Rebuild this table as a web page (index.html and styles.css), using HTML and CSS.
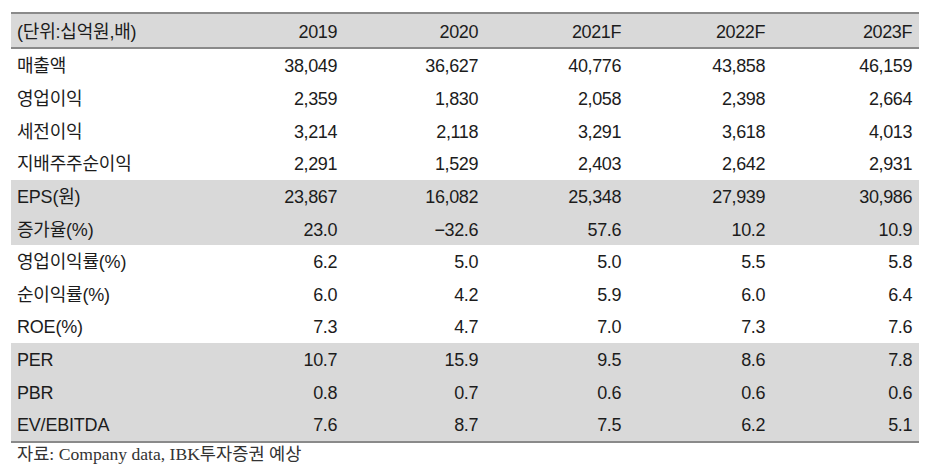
FILE: index.html
```html
<!DOCTYPE html>
<html lang="ko">
<head>
<meta charset="utf-8">
<link rel="stylesheet" href="styles.css">
</head>
<body>
<div class="wrap">
  <div class="table">
    <div class="row head"><div class="lab">(단위:십억원,배)</div><div>2019</div><div>2020</div><div>2021F</div><div>2022F</div><div>2023F</div></div>
    <div class="row"><div class="lab">매출액</div><div>38,049</div><div>36,627</div><div>40,776</div><div>43,858</div><div>46,159</div></div>
    <div class="row"><div class="lab">영업이익</div><div>2,359</div><div>1,830</div><div>2,058</div><div>2,398</div><div>2,664</div></div>
    <div class="row"><div class="lab">세전이익</div><div>3,214</div><div>2,118</div><div>3,291</div><div>3,618</div><div>4,013</div></div>
    <div class="row"><div class="lab">지배주주순이익</div><div>2,291</div><div>1,529</div><div>2,403</div><div>2,642</div><div>2,931</div></div>
    <div class="row band"><div class="lab">EPS(원)</div><div>23,867</div><div>16,082</div><div>25,348</div><div>27,939</div><div>30,986</div></div>
    <div class="row band"><div class="lab">증가율(%)</div><div>23.0</div><div>−32.6</div><div>57.6</div><div>10.2</div><div>10.9</div></div>
    <div class="row"><div class="lab">영업이익률(%)</div><div>6.2</div><div>5.0</div><div>5.0</div><div>5.5</div><div>5.8</div></div>
    <div class="row"><div class="lab">순이익률(%)</div><div>6.0</div><div>4.2</div><div>5.9</div><div>6.0</div><div>6.4</div></div>
    <div class="row"><div class="lab">ROE(%)</div><div>7.3</div><div>4.7</div><div>7.0</div><div>7.3</div><div>7.6</div></div>
    <div class="row band"><div class="lab">PER</div><div>10.7</div><div>15.9</div><div>9.5</div><div>8.6</div><div>7.8</div></div>
    <div class="row band"><div class="lab">PBR</div><div>0.8</div><div>0.7</div><div>0.6</div><div>0.6</div><div>0.6</div></div>
    <div class="row band last"><div class="lab">EV/EBITDA</div><div>7.6</div><div>8.7</div><div>7.5</div><div>6.2</div><div>5.1</div></div>
  </div>
  <div class="source">자료: Company data, IBK투자증권 예상</div>
</div>
</body>
</html>
```
FILE: styles.css
```css
html, body {
  margin: 0;
  padding: 0;
  background: #ffffff;
}
.wrap {
  padding: 12px 0 0 11px;
  width: 908px;
}
.table {
  border-top: 2px solid #8a8a8a;
  border-bottom: 2px solid #8a8a8a;
  font-family: "Liberation Sans", "Noto Sans CJK KR", sans-serif;
  font-size: 18px;
  color: #1c1c1c;
  letter-spacing: -0.4px;
}
.row {
  display: grid;
  grid-template-columns: 192px 141px 141px 143px 144px 147px;
  height: 32.65px;
  align-items: center;
}
.row > div {
  text-align: right;
  padding-right: 7px;
  line-height: 20px;
  padding-top: 2px;
}
.row > .lab {
  text-align: left;
  padding-left: 6px;
  padding-right: 0;
  letter-spacing: -0.2px;
}
.head {
  background: #d9d9d9;
  height: 33px;
  border-bottom: 2px solid #8a8a8a;
}
.band {
  background: #d9d9d9;
}
.source {
  font-family: "Liberation Serif", "Noto Sans CJK KR", serif;
  font-size: 17.6px;
  line-height: 20px;
  color: #333;
  padding: 1px 0 0 6px;
}
```
